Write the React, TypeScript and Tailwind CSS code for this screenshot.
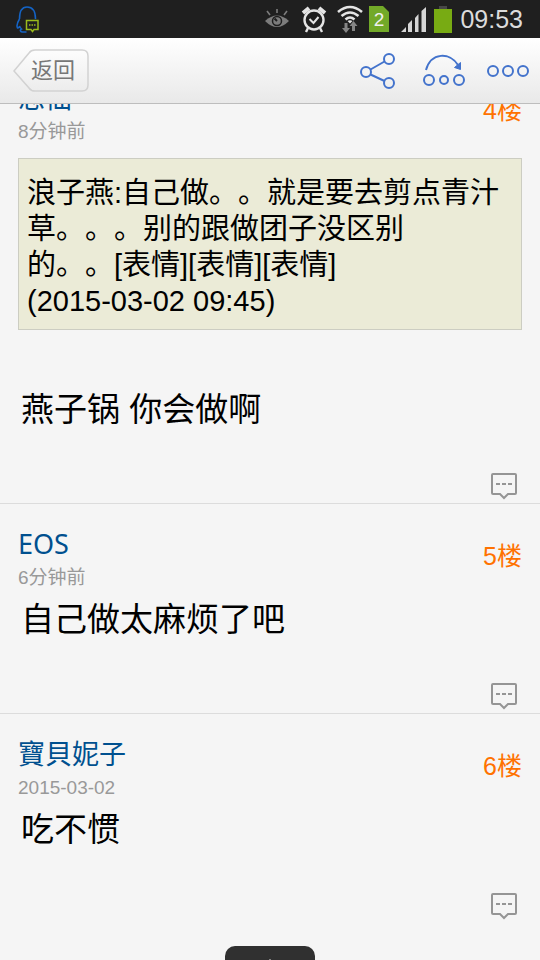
import type { ReactNode } from "react";

const fontStack = "font-['Liberation_Sans','Noto_Sans_CJK_SC',sans-serif]";

function StatusBar() {
  return (
    <div className="flex h-[38px] shrink-0 items-center justify-between bg-[#1f1f1f] pr-[17px] pl-4 text-[#dcdcdc]">
      <svg width="24" height="28" viewBox="0 0 24 28" fill="none" aria-label="QQ">
        <path d="M3.500 14C3.500 6 6 2 11 2s8.500 4 8.500 12M3.500 14c-2.500 4-3 7-2 9 1 0 2-1 2-2 1 2 1 2 2 3-2 1-1 3 1 3h4" stroke="#1463c4" strokeWidth="1.6" />
        <path d="M10.500 15.500h11.500v9h-4l-1.500 2-1.500-2h-4.500z" stroke="#9bbb1c" strokeWidth="1.500" />
        <path d="M13 20h7" stroke="#9bbb1c" strokeWidth="1.500" strokeDasharray="1.500 1" />
      </svg>
      <div className="flex items-center">
        <svg width="24" height="20" viewBox="0 0 24 20" fill="none" stroke="#7c7c7c" aria-label="Smart stay">
          <path d="M0 12Q12 1 24 12Q12 24 0 12Z" fill="#7c7c7c" stroke="none" />
          <circle cx="12" cy="12" r="4.500" stroke="#1f1f1f" strokeWidth="1.500" />
          <path d="M12 12L9.500 9.500" stroke="#1f1f1f" strokeWidth="2" />
          <path d="M2 2l3 4M12 0v4M22 2l-3 4" strokeWidth="1.600" />
        </svg>
        <svg className="ml-3" width="26" height="28" viewBox="0 0 26 28" fill="none" stroke="#e4e4e4" aria-label="Alarm">
          <circle cx="13" cy="15" r="9.500" strokeWidth="2.400" />
          <path d="M8.500 14l4 4 5-6" strokeWidth="2" />
          <path d="M2 8l6-5M24 8l-6-5" strokeWidth="4" />
          <path d="M7 23l-2 4M19 23l2 4" strokeWidth="2.400" />
        </svg>
        <svg className="ml-2.5" width="28" height="28" viewBox="0 0 28 28" fill="none" aria-label="Wi-Fi">
          <path d="M1 7Q13-3 25 7M4.500 11Q13 4 21.500 11M8.500 14.500Q13 10.500 17.500 14.500" stroke="#e4e4e4" strokeWidth="2.600" />
          <path d="M10.500 16Q13 14.500 15.500 16L13 18.500z" fill="#e4e4e4" />
          <path d="M7.500 18h3v5H13l-4 5-4-5h2.500zM15 26v-5h-2.500l4-5 4 5H18v5z" fill="#858585" />
        </svg>
        <svg className="ml-1" width="20" height="26" viewBox="0 0 20 26" aria-label="SIM 2">
          <path d="M0 0h14l6 6v20H0z" fill="#72a928" />
          <text x="10" y="20" textAnchor="middle" fontSize="19" fill="#f0f0f0">2</text>
        </svg>
        <svg className="ml-3" width="25" height="25" viewBox="0 0 25 25" fill="#d6d6d6" aria-label="Signal">
          <path d="M0 25l5-5v5zM7 25v-8l4-4v12zM14 25V11l3.500-4v18zM20.500 25V4L25 0v25z" />
        </svg>
        <svg className="ml-2" width="18" height="27" viewBox="0 0 18 27" aria-label="Battery">
          <path d="M5 0h8v3H5z" fill="#474747" />
          <path d="M0 3h18v24H0z" fill="#78ab13" />
        </svg>
        <span className="ml-2 text-[25px] leading-7">09:53</span>
      </div>
    </div>
  );
}

function Toolbar() {
  return (
    <header className="flex h-[66px] shrink-0 items-center justify-between border-b border-[#bdbdbd] bg-linear-to-b from-white to-[#e9e9e9] pr-2.5 pl-[13px]">
      <button type="button" className="relative flex h-[43px] w-[76px] items-center justify-center pl-1 text-[22px] leading-7 text-[#777]">
        <svg className="absolute inset-0" width="76" height="43" viewBox="0 0 76 43" aria-hidden="true">
          <defs>
            <linearGradient id="back" x1="0" y1="0" x2="0" y2="1">
              <stop offset="0" stopColor="#fdfdfd" />
              <stop offset="1" stopColor="#ececec" />
            </linearGradient>
          </defs>
          <path d="M1 22L16 4Q18 1 22 1H69Q75 1 75 7V36Q75 42 69 42H22Q18 42 16 39Z" fill="url(#back)" stroke="#d2d2d2" strokeWidth="1.500" />
        </svg>
        <span className="relative">返回</span>
      </button>
      <div className="flex items-center text-[#4373cc]">
        <button type="button" aria-label="分享">
          <svg width="36" height="38" viewBox="0 0 36 38" fill="none" stroke="currentColor" strokeWidth="2">
            <circle cx="6" cy="20" r="5" />
            <circle cx="29" cy="7" r="5" />
            <circle cx="29" cy="31" r="5" />
            <path d="M10.500 17.500L24.500 9.500M10.500 22.500L24.500 29" />
          </svg>
        </button>
        <button type="button" aria-label="跳转" className="ml-[26px]">
          <svg width="44" height="38" viewBox="0 0 44 38" fill="none" stroke="currentColor" strokeWidth="2">
            <circle cx="7" cy="28" r="5" />
            <circle cx="22" cy="28" r="4" />
            <circle cx="37" cy="28" r="5" />
            <path d="M4 18C9 0 28 0 36 13" />
            <path d="M32.500 15.500l6-5v7z" fill="currentColor" strokeWidth="1" />
          </svg>
        </button>
        <button type="button" aria-label="更多" className="ml-5">
          <svg width="44" height="38" viewBox="0 0 44 38" fill="none" stroke="currentColor" strokeWidth="2">
            <circle cx="7" cy="19" r="5" />
            <circle cx="22" cy="19" r="5" />
            <circle cx="37" cy="19" r="5" />
          </svg>
        </button>
      </div>
    </header>
  );
}

type PostProps = { name: string; time: string; floor: string; children: ReactNode };

function Post({ name, time, floor, children }: PostProps) {
  return (
    <article className="border-t border-[#dcdcdc] px-[18px] pt-6">
      <div className="flex items-start justify-between">
        <div>
          <h2 className="font-['Noto_Sans','Noto_Sans_CJK_SC',sans-serif] text-[27px] leading-8 text-[#00508f]">{name}</h2>
          <time className="mt-1 block text-[19px] leading-7 text-[#999]">{time}</time>
        </div>
        <span className="mt-3 text-[25px] leading-8 text-[#ff7200]">{floor}</span>
      </div>
      {children}
      <div className="flex justify-end pr-1 pb-[3px]">
        <button type="button" aria-label="回复">
          <svg width="28" height="28" viewBox="0 0 28 28" fill="none" stroke="#959595" strokeWidth="2">
            <path d="M3 2h22q1 0 1 1v18q0 1-1 1h-7l-4 4-4-4H3q-1 0-1-1V3q0-1 1-1z" />
            <path d="M6 12h16" strokeDasharray="4 2" />
          </svg>
        </button>
      </div>
    </article>
  );
}

const quoteLines = [
  "浪子燕:自己做。。就是要去剪点青汁",
  "草。。。别的跟做团子没区别",
  "的。。[表情][表情][表情]",
  "(2015-03-02 09:45)",
];

export default function App() {
  return (
    <div className={`relative flex h-screen flex-col overflow-hidden bg-[#f5f5f5] ${fontStack}`}>
      <StatusBar />
      <Toolbar />
      <main className="min-h-0 flex-1 overflow-hidden">
        <div className="-mt-[47px]">
          <Post name="思仙" time="8分钟前" floor="4楼">
            <blockquote className="mt-3 border border-[#cccdc2] bg-[#ebebd7] px-2 pt-4 pb-2.5 text-[29px] leading-9 text-black [text-spacing-trim:space-all]">
              {quoteLines.map((line) => (
                <span key={line} className="block">{line}</span>
              ))}
            </blockquote>
            <p className="mt-[58px] mb-10 px-[3px] text-[33px] leading-11 text-black">燕子锅 你会做啊</p>
          </Post>
          <Post name="EOS" time="6分钟前" floor="5楼">
            <p className="mt-1.5 mb-10 px-[3px] text-[33px] leading-11 text-black">自己做太麻烦了吧</p>
          </Post>
          <Post name="寶貝妮子" time="2015-03-02" floor="6楼">
            <p className="mt-1.5 mb-10 px-[3px] text-[33px] leading-11 text-black">吃不惯</p>
          </Post>
        </div>
      </main>
      <button type="button" aria-label="展开" className="absolute -bottom-8 left-1/2 flex h-[46px] w-[90px] -translate-x-1/2 justify-center rounded-[10px] bg-[#303030] pt-[13px]">
        <svg width="20" height="12" viewBox="0 0 20 12" fill="white">
          <path d="M10 0l10 12H0z" />
        </svg>
      </button>
    </div>
  );
}
